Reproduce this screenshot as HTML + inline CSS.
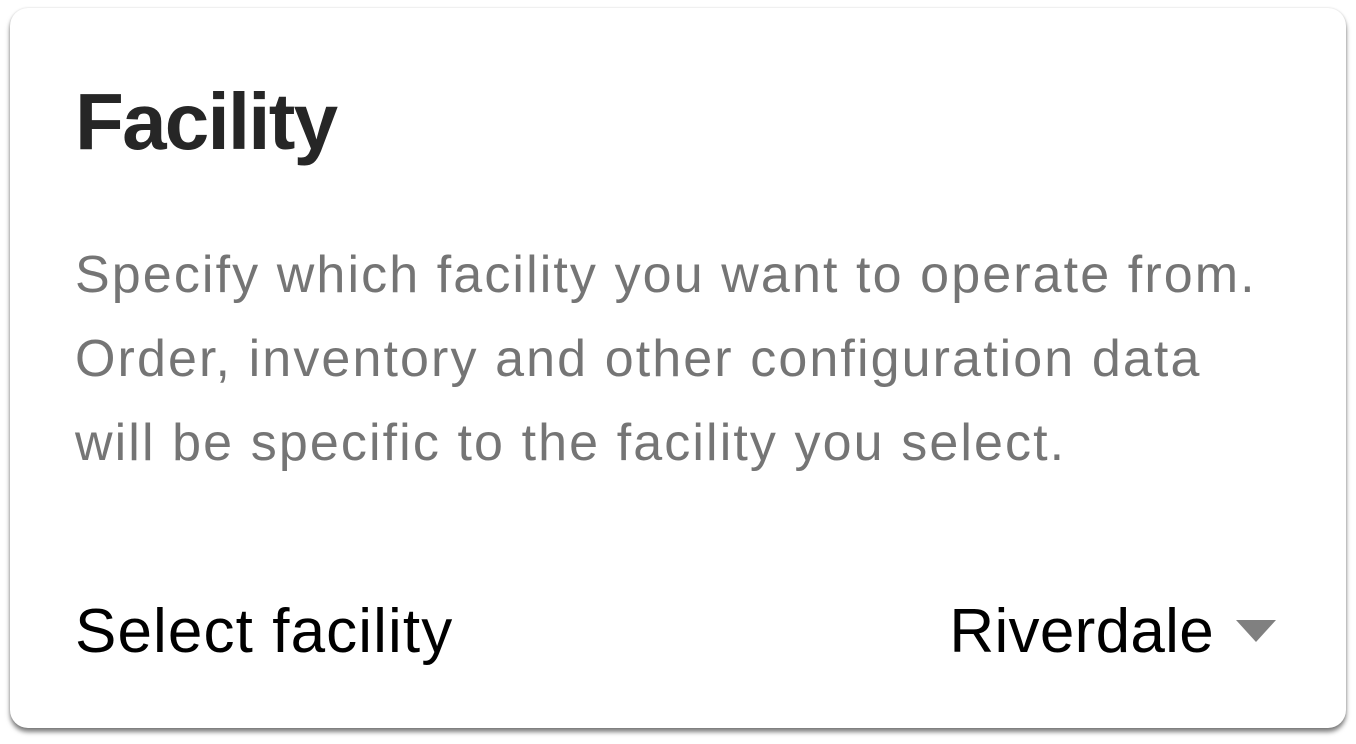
<!DOCTYPE html>
<html><head><style>
html,body{margin:0;padding:0;background:#fff;width:1356px;height:744px;overflow:hidden;font-family:"Liberation Sans",Arial,sans-serif;}
.card{position:absolute;left:10px;top:8px;width:1336px;height:720px;background:#fff;border-radius:18px;box-shadow:0 4px 5px rgba(0,0,0,0.5),0 0 2px rgba(0,0,0,0.15);}
.t{position:absolute;white-space:nowrap;line-height:1;}
.p{font-size:52px;color:#757575;letter-spacing:2.1px;left:75px;}
</style></head><body>
<div class="card"></div>
<div class="t" style="left:75px;top:82px;font-size:80px;font-weight:bold;color:#262626;letter-spacing:-1.8px;">Facility</div>
<div class="t p" style="top:249px;">Specify which facility you want to operate from.</div>
<div class="t p" style="top:333px;">Order, inventory and other configuration data</div>
<div class="t p" style="top:417px;">will be specific to the facility you select.</div>
<div class="t" style="left:75px;top:601px;font-size:62px;color:#000;letter-spacing:1.1px;">Select facility</div>
<div class="t" style="right:142px;top:601px;font-size:62px;color:#000;letter-spacing:0.3px;">Riverdale</div>
<svg style="position:absolute;left:1236px;top:620px" width="40" height="22"><polygon points="0,0 40,0 20,22" fill="#808080"/></svg>
</body></html>
